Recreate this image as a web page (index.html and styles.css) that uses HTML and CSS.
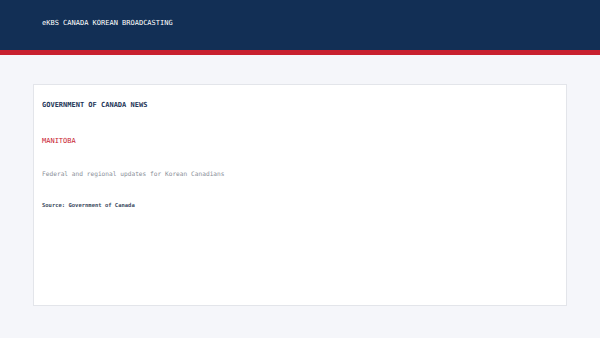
FILE: index.html
```html
<!DOCTYPE html>
<html lang="en">
  <head>
    <meta charset="UTF-8" />
    <meta name="viewport" content="width=device-width, initial-scale=1.0" />
    <title>eKBS Canada Korean Broadcasting</title>
    <link rel="stylesheet" href="styles.css">
  </head>
  <body>
    <div class="topbar">
      <span class="brand">eKBS CANADA KOREAN BROADCASTING</span>
    </div>

    <div class="page">
      <div class="card">
        <h2 class="card-title">GOVERNMENT OF CANADA NEWS</h2>
        <h3 class="region">MANITOBA</h3>
        <p class="desc">Federal and regional updates for Korean Canadians</p>
        <p class="source">Source: Government of Canada</p>
      </div>
    </div>
  </body>
</html>
```

FILE: styles.css
```css
body {
  font-family: "DejaVu Sans Mono", monospace;
  margin: 0;
  padding: 0;
  background-color: #f5f6fa;
}
.topbar {
  background-color: #122f55;
  border-bottom: 5px solid #c8202f;
  height: 50px;
  display: flex;
  align-items: center;
  padding: 0 42px;
}
.brand {
  color: #ffffff;
  font-size: 7px;
  margin-top: -4px;
}
.page {
  padding: 29px 33px 33px;
}
.card {
  background-color: #ffffff;
  border: 1px solid #e3e5ea;
  height: 222px;
  box-sizing: border-box;
  padding: 16px 8px;
}
.card-title {
  margin: 0;
  font-size: 7px;
  font-weight: bold;
  color: #1d3557;
}
.region {
  margin: 28px 0 0;
  font-size: 7px;
  font-weight: normal;
  color: #c8202f;
}
.desc {
  margin: 25px 0 0;
  font-size: 6.2px;
  color: #8a8f99;
}
.source {
  margin: 25px 0 0;
  font-size: 5.5px;
  font-weight: bold;
  color: #3c4a5e;
}
```
